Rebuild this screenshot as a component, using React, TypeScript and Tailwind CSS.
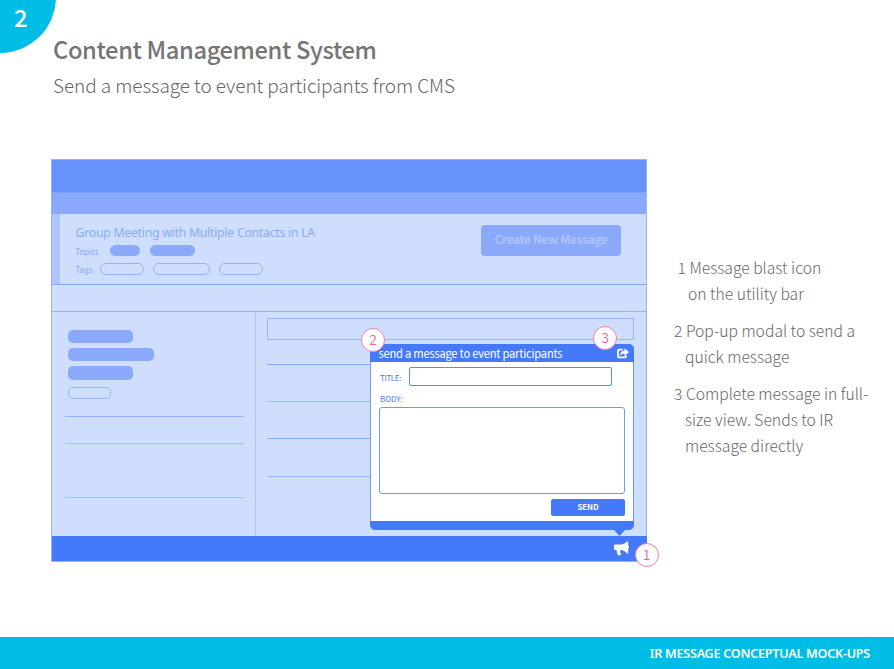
import React from "react";

const SOURCE = "font-['Noto_Sans_CJK_SC','Noto_Sans',sans-serif]";

type BadgeProps = { label: string; className: string };

function Badge({ label, className }: BadgeProps) {
  return (
    <div
      className={`absolute flex size-6 items-center justify-center rounded-full border border-[#f07cb6] bg-white pb-[2px] text-[14px] leading-none font-[350] text-[#f0649f] ${className}`}
    >
      {label}
    </div>
  );
}

function ShareIcon() {
  return (
    <svg className="h-[11px] w-3" viewBox="0 0 12 11" fill="none">
      <path d="M5.5 1.6H2.2Q1.1 1.6 1.1 2.6V8.4Q1.1 9.4 2.2 9.4H7.9Q8.9 9.4 8.9 8.4V7.3" stroke="white" strokeWidth="1.9" />
      <path d="M7.6 0.2L12 4.1L7.6 7.9V5.8C5.6 5.7 4.2 6.2 3 7.8C3.1 4.4 4.8 2.5 7.6 2.4Z" fill="white" />
    </svg>
  );
}

function Bullhorn() {
  return (
    <svg className="h-[15px] w-[15px]" viewBox="0 0 15 15" fill="white">
      <path d="M1 3.4H6.5C9.4 3.4 11.6 2 13 0.5H14.2V4.5Q15 4.9 15 6Q15 7.1 14.2 7.5V12.6H13C11.4 10.4 9.4 9 6.4 9C6 9.9 6.3 10.6 6.5 11.3C6.3 12.2 6.7 12.8 7.3 13.4C6.4 14.5 4.6 14.5 3.7 13.9C3.1 12.2 2.6 10.7 2.7 9H1Q0 9 0 8V4.4Q0 3.4 1 3.4Z" />
    </svg>
  );
}

function Note({ num, lines, className, indent }: { num: string; lines: string[]; className: string; indent: string }) {
  return (
    <li className={className}>
      <div>{num} {lines[0]}</div>
      {lines.slice(1).map((line) => (
        <div key={line} className={indent}>{line}</div>
      ))}
    </li>
  );
}

function Wireframe() {
  return (
    <div className="relative flex h-[403px] w-[596px] flex-col border border-[#98b5fc] bg-[#cfdefd]">
      <div className="h-8 shrink-0 bg-[#6792fb]" />
      <div className="h-[22px] shrink-0 border-t border-[#7a9ffc] bg-[#8ba9fb]" />
      <div className="flex h-[71px] shrink-0 border-b border-[#8aaafb] text-[#8aaafb]">
        <div className="w-2 bg-[#adc4fc]" />
        <div className="flex flex-col pt-[10px] pl-[15.5px]">
          <div className="h-4 pt-px font-['Noto_Sans',sans-serif] text-[12.2px] leading-4 tracking-[-0.22px] whitespace-nowrap">
            Group Meeting with Multiple Contacts in LA
          </div>
          <div className="mt-1 flex h-3 items-center font-['Noto_Sans',sans-serif] text-[8px]">
            <span className="w-[34.5px] pt-[3px]">Topics</span>
            <span className="h-[11px] w-[30px] rounded-full bg-[#8ba9fb]" />
            <span className="ml-[10px] h-[11px] w-[45px] rounded-full bg-[#8ba9fb]" />
          </div>
          <div className="mt-[7px] flex h-3 items-center font-['Noto_Sans',sans-serif] text-[8px]">
            <span className="w-[24.5px] pt-px">Tags</span>
            <span className="h-3 w-11 rounded-full border border-[#94b1fb]" />
            <span className="ml-[9px] h-3 w-[57px] rounded-full border border-[#94b1fb]" />
            <span className="ml-[9px] h-3 w-11 rounded-full border border-[#94b1fb]" />
          </div>
        </div>
        <div className="mt-[11px] mr-[25px] ml-auto flex h-[31px] w-[140px] items-center justify-center rounded-[4px] bg-[#8ba9fb] text-[11.9px] font-bold tracking-[-0.34px] whitespace-nowrap text-[#adc4fd]">
          <span className="pb-1">Create New Message</span>
        </div>
      </div>
      <div className="h-[27px] shrink-0 border-b border-[#96b3fb]" />
      <div className="flex h-56 shrink-0">
        <div className="w-[204px] shrink-0 border-r border-[#adc5fb] pt-[18px] pl-[13px]">
          <div className="ml-[3px] h-[13px] w-[65px] rounded-[5px] bg-[#8ba9fb]" />
          <div className="mt-[5px] ml-[3px] h-[13px] w-[86px] rounded-[5px] bg-[#8ba9fb]" />
          <div className="mt-[5px] ml-[3px] h-[14px] w-[65px] rounded-[5px] bg-[#8ba9fb]" />
          <div className="mt-[7px] ml-[3px] h-3 w-[43px] rounded-[5px] border border-[#9ab6fb]" />
          <div className="mt-[17px] h-px w-[179px] bg-[#95b3fc]" />
          <div className="mt-[26px] h-px w-[179px] bg-[#a2bdfc]" />
          <div className="mt-[53px] h-px w-[179px] bg-[#a2bdfc]" />
        </div>
        <div className="pt-[6px] pl-[11px]">
          <div className="h-[22px] w-[367px] border border-[#97b4fc]" />
          <div className="mt-6 h-px w-[110px] bg-[#82a6fc]" />
          <div className="mt-9 h-px w-[110px] bg-[#9cb8fc]" />
          <div className="mt-9 h-px w-[110px] bg-[#8badfc]" />
          <div className="mt-[37px] h-px w-[110px] bg-[#9cb8fc]" />
        </div>
      </div>
      <div className="-mr-px flex h-[25px] shrink-0 items-start justify-end bg-[#447afa] pt-[5px] pr-[18px]">
        <Bullhorn />
      </div>

      <div className="absolute top-[184px] left-[318px] flex h-[186px] w-[264px] flex-col rounded-[5px] border border-[#6f99fb] bg-white text-[#447afa]">
        <div className="-mx-px -mt-px flex h-[18px] shrink-0 items-center rounded-t-[5px] bg-[#447afa] pr-[6px] pl-[8.5px] text-[11.2px] leading-none tracking-[-0.24px] whitespace-nowrap text-white">
          <span className="pt-[2px]">send a message to event participants</span>
          <span className="mr-[-1px] ml-auto pt-px"><ShareIcon /></span>
        </div>
        <div className="mt-[5px] flex h-[19px] shrink-0 items-center pl-[9px]">
          <span className="w-[29px] pt-[3px] text-[7.9px] leading-none tracking-[-0.3px]">TITLE:</span>
          <span className="h-[19px] w-[203px] rounded-[2px] border border-[#5a89fa]" />
        </div>
        <div className="mt-[9px] h-2 shrink-0 pl-[9px] text-[7.9px] leading-2">BODY:</div>
        <div className="mt-[4px] ml-2 h-[87px] w-[246px] shrink-0 rounded-[3px] border border-[#6e98fb]" />
        <div className="mt-[5px] ml-[180px] flex h-[17px] w-[74px] shrink-0 items-center justify-center rounded-[2px] bg-[#447afa] pb-[2px] text-[8px] leading-none font-bold tracking-[-0.2px] text-white">
          SEND
        </div>
        <div className="-mx-px mt-auto -mb-px h-[9px] shrink-0 rounded-b-[5px] bg-[#447afa]" />
      </div>
      <svg className="absolute top-[370px] left-[562px] h-[6px] w-[11px]" viewBox="0 0 11 6" fill="#447afa">
        <path d="M0 0H11L5.5 6Z" />
      </svg>
      <Badge label="2" className="top-[168px] left-[309px]" />
      <Badge label="3" className="top-[166px] left-[541px]" />
      <Badge label="1" className="top-[383px] left-[582.5px]" />
    </div>
  );
}

export default function App() {
  return (
    <div className={`relative flex h-[669px] w-[894px] flex-col overflow-hidden bg-white ${SOURCE}`}>
      <div className="absolute -top-[59px] -left-14 size-28 rounded-full bg-[#00bde7]" />
      <div className="absolute top-[5px] left-[14px] text-[24px] leading-6 font-medium text-white">2</div>

      <header className="h-[159px] shrink-0 pt-[33px] pl-[53px] text-[#757575]">
        <h1 className="text-[23.7px] leading-8 font-medium tracking-[-0.38px] whitespace-nowrap">Content Management System</h1>
        <h2 className="mt-[6px] text-[19px] leading-7 font-light tracking-[-0.08px] whitespace-nowrap text-[#666666]">Send a message to event participants from CMS</h2>
      </header>

      <main className="flex h-[478px] shrink-0 pl-[51px]">
        <Wireframe />
        <ol className="ml-[27px] flex flex-col gap-[11px] pt-[96px] text-[15.7px] leading-[26px] font-light whitespace-nowrap text-[#666666]">
          <Note num="1" lines={["Message blast icon", "on the utility bar"]} className="pl-[3.5px]" indent="pl-[10.5px]" />
          <Note num="2" lines={["Pop-up modal to send a", "quick message"]} className="" indent="pl-[11px]" />
          <Note num="3" lines={["Complete message in full-", "size view. Sends to IR", "message directly"]} className="" indent="pl-[11px]" />
        </ol>
      </main>

      <footer className="flex h-8 shrink-0 items-center justify-end bg-[#00bde7] pt-[3px] pr-6 font-['Noto_Sans',sans-serif] text-[12.6px] font-semibold tracking-[-0.25px] whitespace-nowrap text-white">
        IR MESSAGE CONCEPTUAL MOCK-UPS
      </footer>
    </div>
  );
}
